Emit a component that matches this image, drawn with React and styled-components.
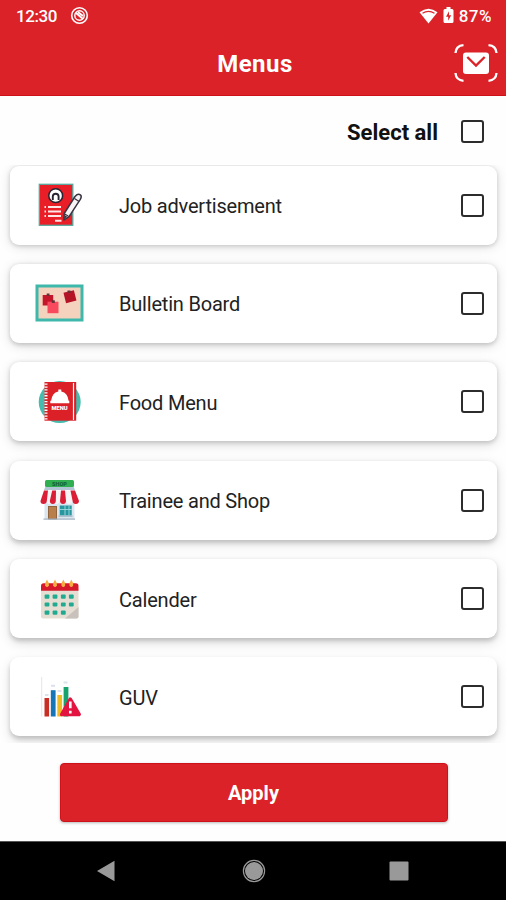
import styled, { createGlobalStyle } from 'styled-components'
import { useState } from 'react'

const GlobalStyle = createGlobalStyle`
    * {
        box-sizing:border-box;
    }

    body {
        margin:0;
        background:#fff;
        font-family:Roboto, "Liberation Sans", sans-serif;
    }
`

const Screen = styled.div`
    width:506px;
    height:900px;
    display:flex;
    overflow:hidden;
    background:#fefefe;
    flex-direction:column;
`

const Header = styled.header`
    height:96px;
    color:#fff;
    flex-shrink:0;
    background:#db2228;
    border-bottom:1px solid #cf1219;
`

const StatusBar = styled.div`
    height:31px;
    display:flex;
    font-size:17px;
    font-weight:500;
    align-items:center;
    padding:0 14px 0 16px;
    justify-content:space-between;
`

const StatusGroup = styled.div`
    display:flex;
    align-items:center;
    gap:${props => props.$gap};
`

const StatusText = styled.span`
    line-height:20px;
    letter-spacing:${props => props.$spacing || '0'};
`

const TitleBar = styled.div`
    height:64px;
    display:grid;
    align-items:center;
    padding:0 8px 0 8px;
    grid-template-columns:44px 1fr 44px;
`

const Title = styled.h1`
    margin:0;
    grid-column:2/3;
    font-size:24px;
    font-weight:700;
    text-align:center;
    line-height:30px;
    padding:2px 0 0 4px;
    letter-spacing:0.5px;
`

const MailButton = styled.button`
    padding:0;
    border:none;
    height:44px;
    display:flex;
    background:none;
    align-items:center;
`

const SelectAll = styled.div`
    height:69px;
    gap:23px;
    display:flex;
    flex-shrink:0;
    align-items:center;
    padding:1px 22px 0 0;
    justify-content:flex-end;
`

const SelectLabel = styled.span`
    color:#111;
    font-size:22px;
    font-weight:700;
    line-height:28px;
    padding-top:3px;
`

const Checkbox = styled.button`
    padding:0;
    width:23px;
    height:23px;
    flex-shrink:0;
    border-radius:3px;
    border:2px solid #2c2c2c;
    background:${props => props.$checked ? '#db2228' : 'transparent'};
`

const List = styled.main`
    gap:19.4px;
    height:578px;
    display:flex;
    flex-shrink:0;
    overflow:hidden;
    padding:0.5px 9px 0 10px;
    flex-direction:column;
`

/* the shadow drops lower for cards further down the list */
const Card = styled.div`
    height:79px;
    display:flex;
    flex-shrink:0;
    background:#fff;
    align-items:center;
    border-radius:9px;
    padding:0 13px 0 20px;
    box-shadow:0 ${props => 1 + props.$depth * 0.4}px 4px rgba(0,0,0,0.16), 0 ${props => 2 + props.$depth * 0.6}px 12px rgba(0,0,0,0.13);
`

const CardLabel = styled.span`
    flex:1;
    color:#222;
    font-size:20px;
    line-height:26px;
    padding:2px 0 0 29px;
    letter-spacing:-0.2px;
`

const Footer = styled.footer`
    flex:1;
    display:flex;
    padding:20px 0 0 1px;
    align-items:flex-start;
    justify-content:center;
`

const ApplyButton = styled.button`
    width:388px;
    height:59px;
    color:#fff;
    font-size:20px;
    font-weight:700;
    padding:1px 0 0;
    border-radius:4px;
    background:#db2228;
    font-family:inherit;
    border:1px solid #cf1219;
    box-shadow:0 1px 3px rgba(0,0,0,0.28);
`

const NavBar = styled.nav`
    height:59px;
    flex-shrink:0;
    display:flex;
    background:#000;
    align-items:center;
    padding:0 93px 0 94px;
    border-top:1px solid #555;
    justify-content:space-between;
`

function CastIcon() {
    return (
        <svg width="19" height="19" viewBox="0 0 19 19" fill="none" stroke="#fff">
            <circle cx="9.5" cy="9.5" r="7.8" strokeWidth="1.6" />
            <circle cx="9.5" cy="9.5" r="4.7" strokeWidth="1.4" />
            <path d="M5.5 6.5l7.5 6.5M8 6l5 4" strokeWidth="1.8" />
        </svg>
    )
}

function WifiIcon() {
    return (
        <svg width="19" height="16" viewBox="0 0 19 16">
            <path d="M.5 4.2Q9.5-2.8 18.5 4.2L9.5 15.5Z" fill="#fff" />
            <path d="M3.5 5.3Q9.5 1.6 15.5 5.3" fill="none" stroke="#db2228" strokeWidth="1.2" />
        </svg>
    )
}

function BatteryIcon() {
    return (
        <svg width="11" height="17" viewBox="0 0 11 17">
            <path d="M3.5 0h4v2H9a1.5 1.5 0 0 1 1.5 1.5v11A1.5 1.5 0 0 1 9 16H2a1.5 1.5 0 0 1-1.5-1.5v-11A1.5 1.5 0 0 1 2 2h1.5z" fill="#fff" />
            <path d="M6 4.3L3 9.7h2.2v4L8.2 8.2H6z" fill="#db2228" />
        </svg>
    )
}

function MailIcon() {
    return (
        <svg width="44" height="40" viewBox="0 0 44 40" fill="none">
            <path d="M1.5 10Q2 2.8 9.5 2.2M34.5 2.2Q42 2.8 42.5 10M1.5 30Q2 37.2 9.5 37.8M34.5 37.8Q42 37.2 42.5 30" stroke="#fff" strokeWidth="2.3" />
            <rect x="9" y="9.5" width="26" height="21.5" rx="3" fill="#fff" />
            <path d="M13.3 14L22 22.5L30.7 14" stroke="#db2228" strokeWidth="2.4" />
        </svg>
    )
}

function JobIcon() {
    return (
        <svg width="60" height="60" viewBox="0 0 60 60" fill="none">
            <rect x="9.3" y="9.3" width="33.5" height="41" fill="#e91e26" stroke="#57a9a0" strokeWidth="1.3" />
            <circle cx="25.7" cy="20.7" r="6.9" fill="#fff" stroke="#282331" strokeWidth="1.5" />
            <path d="M22.8 25v-3.4a2.9 2.9 0 0 1 5.8 0V25" stroke="#282331" strokeWidth="1.9" />
            <path d="M18 32h13M18 36.5h13M18 41h13M25 45.7h6.5M14.5 32h1.5M14.5 36.5h1.5M14.5 41h1.5" stroke="#ffe5e5" strokeWidth="1.9" />
            <path d="M45 21.5Q48 18 50.6 20.1Q52 21.6 50.3 24.4L39.2 41.4L34 45L34.2 38.5Z" fill="#f8f3f5" stroke="#393441" strokeWidth="1.5" strokeLinejoin="round" />
            <path d="M44.5 23.5l4.6 3M34.7 39l3.5 2" stroke="#393441" strokeWidth="1.2" />
            <path d="M34.2 44l.4-4 2.6 1.7z" fill="#393441" />
        </svg>
    )
}

function BoardIcon() {
    return (
        <svg width="60" height="60" viewBox="0 0 60 60">
            <rect x="7" y="13" width="45" height="34" fill="#f4d2bd" stroke="#3fb8ac" strokeWidth="3" />
            <rect x="12.7" y="22" width="10.5" height="10.5" fill="#c3162a" />
            <rect x="17.5" y="28.7" width="11" height="11.5" fill="#f9495f" />
            <rect x="34.7" y="18.3" width="10.7" height="10.7" fill="#b51326" transform="rotate(-14 40 24)" />
            <path d="M16.7 20.5h2.8v2.6h-2.8zM21.8 27.3h3v2.6h-3zM37.5 17.5h3v2.6h-3z" fill="#643238" />
        </svg>
    )
}

const MenuWord = styled.text`
    fill:#fff;
    font-size:5.7px;
    font-weight:900;
    font-family:Roboto, sans-serif;
`

const ShopWord = styled(MenuWord)`
    fill:#12613a;
    font-size:5.8px;
`

function FoodIcon() {
    return (
        <svg width="60" height="60" viewBox="0 0 60 60">
            <circle cx="29.7" cy="30" r="21" fill="#47bcae" />
            <rect x="14.5" y="10" width="31.7" height="38.7" fill="#db2028" />
            <path d="M43.5 11v37" stroke="#fff" strokeWidth="1.2" />
            <path d="M16 11.5v36" stroke="#fff" strokeWidth="3" strokeDasharray="1.3 1.6" />
            <path d="M21 29.2Q22 20.6 28.3 19.5V17.5h3V19.5Q37.7 20.6 38.7 29.2ZM20.3 28.8h19v2.4h-19z" fill="#fff" />
            <MenuWord x="21.5" y="37.8" textLength="16.2" lengthAdjust="spacingAndGlyphs">MENU</MenuWord>
        </svg>
    )
}

function ShopIcon() {
    return (
        <svg width="60" height="60" viewBox="0 0 60 60">
            <path d="M14 20L15.5 16.5H43.5L45 20z" fill="#b2c6d5" />
            <rect x="15" y="10" width="29" height="7" rx="1.5" fill="#31ae52" />
            <ShopWord x="22" y="15.6" textLength="15" lengthAdjust="spacingAndGlyphs">SHOP</ShopWord>
            <path d="M14.5 29h30v20h-30z" fill="#d9e5ef" />
            <path d="M14 20.5h31l4 10.5q-.2 3-3.3 3t-3.3-3q-.3 3-3.3 3t-3.3-3q-.3 3-3.3 3t-3-3q-.3 3-3.3 3t-3.3-3q-.3 3-3.3 3t-3.3-3q-.3 3-3.3 3T10.5 31z" fill="#f7f4f6" />
            <path d="M14 20.5h4l-1.2 10.5q-.2 3-3.3 3t-3-3zM22.2 20.5h3.8l-.2 10.5q-.2 3-3 3t-3-3zM31 20.5h4l1 10.5q-.2 3-3 3t-3-3zM40.5 20.5H45l4 10.5q-.2 3-3.2 3t-3.2-3z" fill="#d91e36" />
            <rect x="18.5" y="36.5" width="8" height="12.5" fill="#b97f4b" stroke="#91643e" />
            <rect x="29.7" y="35.5" width="12" height="10" fill="#28969f" />
            <path d="M29.7 39.5h12M35 35.5v10M39 35.5v10" stroke="#9edbe0" strokeWidth=".9" />
            <path d="M28.5 46.2h14M13.5 49.2h31.5" stroke="#a4b4c4" strokeWidth="1.2" />
        </svg>
    )
}

const ringColumns = [17, 25, 33.3, 41.3]
const calendarRows = [27.7, 35.5, 43.7]

function CalendarIcon() {
    return (
        <svg width="60" height="60" viewBox="0 0 60 60">
            <path d="M11 20h37.5v27.5a2 2 0 0 1-2 2H13a2 2 0 0 1-2-2z" fill="#e6ded2" />
            <path d="M48.5 38v9.5a2 2 0 0 1-2 2H35z" fill="#c9c1bb" />
            <path d="M11 21.8V17a2.7 2.7 0 0 1 2.7-2.7h32A2.7 2.7 0 0 1 48.5 17v4.8z" fill="#d7192c" />
            {ringColumns.map(x => (
                <path key={x} d={`M${x} 10.5q2.2 3.3 1.9 6-1.9 3.2-3.8 0-.3-2.7 1.9-6z`} fill="#f6ae43" />
            ))}
            {calendarRows.map((y, row) => ringColumns.slice(0, row === 2 ? 3 : 4).map(x => (
                <rect key={`${x}-${y}`} x={x - 2.4} y={y - 2.1} width="4.8" height="4.2" rx="1" fill="#20aa91" />
            )))}
        </svg>
    )
}

function GuvIcon() {
    return (
        <svg width="60" height="60" viewBox="0 0 60 60">
            <path d="M11.7 10v39.5" stroke="#dedede" strokeWidth=".8" />
            <path d="M15 28h3.5M21 18.8h4M27.5 24h4M33.5 15.5h4" stroke="#dce1ee" strokeWidth="2" />
            <rect x="14.5" y="31" width="4.6" height="18.5" fill="#c72e24" />
            <rect x="20.8" y="23.2" width="4.8" height="26.3" fill="#1674b8" />
            <rect x="27.3" y="28" width="4.8" height="21.5" fill="#edbd23" />
            <rect x="33.6" y="20" width="4.8" height="29.5" fill="#16a36d" />
            <path d="M40.3 32.2L49.2 47.5H31.6Z" fill="#e31540" stroke="#e31540" strokeWidth="3.5" strokeLinejoin="round" />
            <path d="M40.3 34.5v6.8M40.3 43.8v2.7" stroke="#fff" strokeWidth="2.6" />
        </svg>
    )
}

function NavIcon({ children }) {
    return <svg width="28" height="28" viewBox="0 0 28 28">{children}</svg>
}

const menus = [
    { name: 'Job advertisement', Icon: JobIcon },
    { name: 'Bulletin Board', Icon: BoardIcon },
    { name: 'Food Menu', Icon: FoodIcon },
    { name: 'Trainee and Shop', Icon: ShopIcon },
    { name: 'Calender', Icon: CalendarIcon },
    { name: 'GUV', Icon: GuvIcon },
]

function App() {

    const [selected, setSelected] = useState([])

    const allSelected = selected.length === menus.length

    function toggleMenu(name) {
        if (selected.includes(name)) {
            setSelected(selected.filter(item => item !== name))
        } else {
            setSelected([...selected, name])
        }
    }

    function toggleAll() {
        setSelected(allSelected ? [] : menus.map(menu => menu.name))
    }

    return (
        <>
            <GlobalStyle />
            <Screen>
                <Header>
                    <StatusBar>
                        <StatusGroup $gap="13px">
                            <StatusText $spacing="-0.4px">12:30</StatusText>
                            <CastIcon />
                        </StatusGroup>
                        <StatusGroup $gap="5px">
                            <WifiIcon />
                            <BatteryIcon />
                            <StatusText $spacing="0.5px">87%</StatusText>
                        </StatusGroup>
                    </StatusBar>
                    <TitleBar>
                        <Title>Menus</Title>
                        <MailButton aria-label="Mail"><MailIcon /></MailButton>
                    </TitleBar>
                </Header>
                <SelectAll>
                    <SelectLabel>Select all</SelectLabel>
                    <Checkbox aria-label="Select all" $checked={allSelected} onClick={toggleAll} />
                </SelectAll>
                <List>
                    {menus.map(({ name, Icon }, index) => (
                        <Card key={name} $depth={index}>
                            <Icon />
                            <CardLabel>{name}</CardLabel>
                            <Checkbox aria-label={name} $checked={selected.includes(name)} onClick={() => toggleMenu(name)} />
                        </Card>
                    ))}
                </List>
                <Footer>
                    <ApplyButton>Apply</ApplyButton>
                </Footer>
                <NavBar>
                    <NavIcon><path d="M3 14L20.5 3.7v20.6z" fill="#999" /></NavIcon>
                    <NavIcon>
                        <circle cx="14" cy="14" r="9" fill="#999" />
                        <circle cx="14" cy="14" r="10.6" fill="none" stroke="#999" strokeWidth="1.2" />
                    </NavIcon>
                    <NavIcon><rect x="4.5" y="4.5" width="19" height="19" rx="1" fill="#999" /></NavIcon>
                </NavBar>
            </Screen>
        </>
    )
}

export default App
